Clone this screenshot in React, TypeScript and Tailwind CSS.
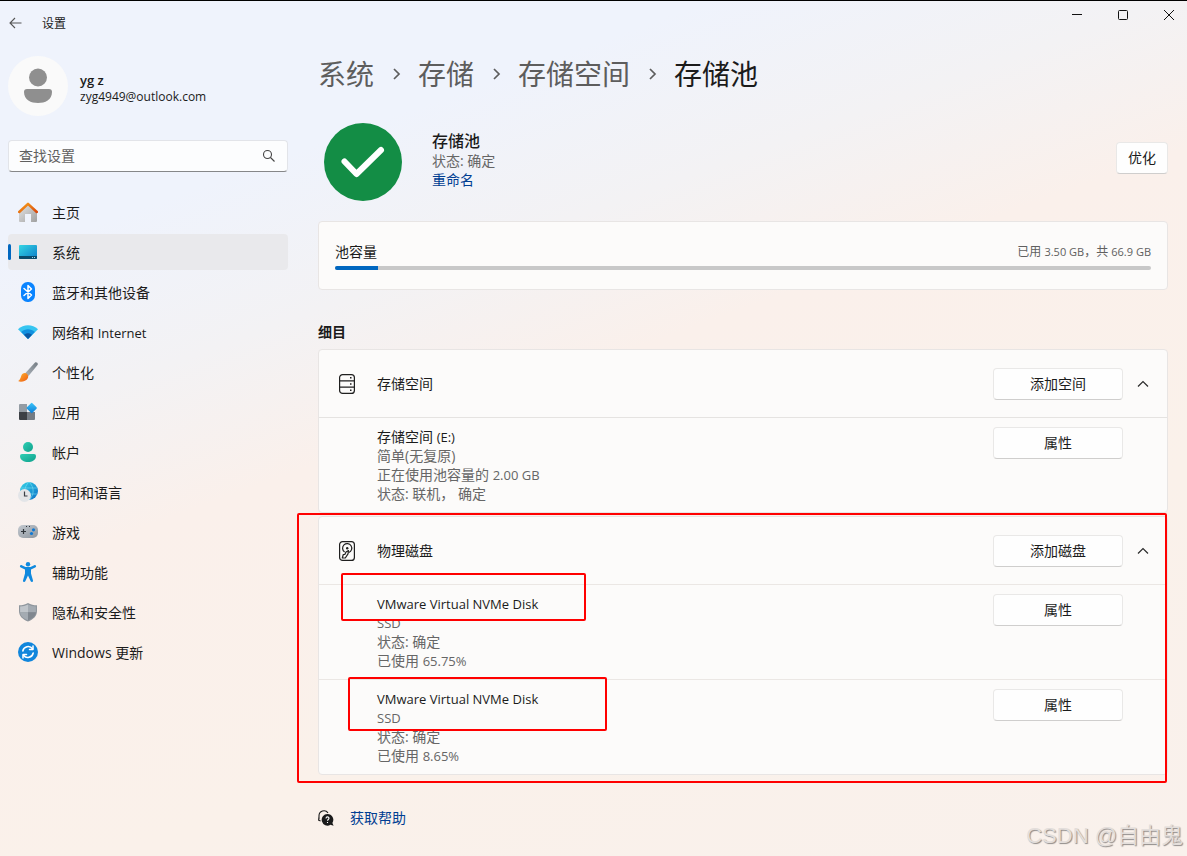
import type { ReactNode } from 'react'

const HomeIcon = () => (
    <svg width="20" height="20" viewBox="0 0 20 20">
        <defs>
            <linearGradient id="homeWall" x1="0" y1="0" x2="1" y2="1">
                <stop offset="0" stopColor="#e6e6e6" />
                <stop offset="1" stopColor="#a0a0a0" />
            </linearGradient>
            <linearGradient id="homeRoof" x1="0" y1="0" x2="1" y2="1">
                <stop offset="0" stopColor="#f9a01b" />
                <stop offset="1" stopColor="#d8480c" />
            </linearGradient>
        </defs>
        <path d="M1 10 10 1.600 19 10v9a1 1 0 0 1-1 1h-5v-8H7v8H2a1 1 0 0 1-1-1z" fill="url(#homeWall)" />
        <path d="M1.200 10 10 1.800l8.800 8.200" fill="none" stroke="url(#homeRoof)" strokeWidth="2.500" strokeLinecap="round" strokeLinejoin="round" />
    </svg>
)

const SystemIcon = () => (
    <svg width="20" height="20" viewBox="0 0 20 20">
        <defs>
            <linearGradient id="screen" x1="0" y1="0" x2="1" y2="1">
                <stop offset="0" stopColor="#35d6e4" />
                <stop offset="1" stopColor="#0d7cc8" />
            </linearGradient>
        </defs>
        <rect x="1" y="3" width="18" height="14" rx="1" fill="url(#screen)" />
        <path d="M1 14h18v2a1 1 0 0 1-1 1H2a1 1 0 0 1-1-1z" fill="#0b4a6b" />
        <path d="M14 15h1v1h-1zM16 15h1v1h-1z" fill="#9fdcf0" />
    </svg>
)

const BluetoothIcon = () => (
    <svg width="20" height="20" viewBox="0 0 20 20">
        <rect x="3" y="0" width="14" height="20" rx="6.500" fill="#0a84ff" />
        <path d="M6 6.500 13.500 13 10 16.500v-13L13.500 7 6 13.500" fill="none" stroke="#fff" strokeWidth="1.500" strokeLinejoin="round" strokeLinecap="round" />
    </svg>
)

const NetworkIcon = () => (
    <svg width="20" height="20" viewBox="0 0 20 20">
        <path d="M0 7.200C5.500 1.900 14.500 1.900 20 7.200L10 17z" fill="#36c5f1" />
        <path d="M3.200 10c3.800-3.600 9.800-3.600 13.600 0L10 17z" fill="#1290df" />
        <path d="M6 12.800c2.300-2.100 5.700-2.100 8 0L10 17z" fill="#0c59a4" />
    </svg>
)

const BrushIcon = () => (
    <svg width="20" height="20" viewBox="0 0 20 20">
        <defs>
            <linearGradient id="bristle" x1="0" y1="0" x2="1" y2="1">
                <stop offset="0" stopColor="#ffb52e" />
                <stop offset="1" stopColor="#ee5a12" />
            </linearGradient>
            <linearGradient id="handle" x1="1" y1="0" x2="0" y2="1">
                <stop offset="0" stopColor="#747c84" />
                <stop offset="1" stopColor="#adb5bc" />
            </linearGradient>
        </defs>
        <path d="M7.200 11.200 16.800.8c1.600-1.300 3.800.6 2.700 2.300L10.500 14z" fill="url(#handle)" />
        <path d="M3.200 14c.7-3 4.500-4 6.200-1.800 2 2.600 0 5.500-2.400 6.600-2.300 1-5 1.200-7 .3 1.500-.6 2.500-2.700 3.200-5.100z" fill="url(#bristle)" />
    </svg>
)

const AppsIcon = () => (
    <svg width="20" height="20" viewBox="0 0 20 20">
        <defs>
            <linearGradient id="tileBlue" x1="0" y1="0" x2="1" y2="1">
                <stop offset="0" stopColor="#3cc6fa" />
                <stop offset="1" stopColor="#0b7bd6" />
            </linearGradient>
        </defs>
        <path d="M1 3a1 1 0 0 1 1-1h7v8H1z" fill="#949ca4" />
        <path d="M1 10h8v8H2a1 1 0 0 1-1-1z" fill="#3c4045" />
        <path d="M9 10h8v7a1 1 0 0 1-1 1H9z" fill="#757c84" />
        <rect x="9.800" y="2.100" width="7.800" height="7.800" rx="1" transform="rotate(45 13.700 6)" fill="url(#tileBlue)" />
    </svg>
)

const AccountIcon = () => (
    <svg width="20" height="20" viewBox="0 0 20 20">
        <defs>
            <linearGradient id="person" x1="0" y1="0" x2="1" y2="1">
                <stop offset="0" stopColor="#2fcfb4" />
                <stop offset="1" stopColor="#0fa08c" />
            </linearGradient>
        </defs>
        <circle cx="10" cy="5" r="5" fill="url(#person)" />
        <path d="M4 12h12a2 2 0 0 1 2 2c0 4-4 6-8 6s-8-2-8-6a2 2 0 0 1 2-2z" fill="url(#person)" />
    </svg>
)

const TimeIcon = () => (
    <svg width="20" height="20" viewBox="0 0 20 20">
        <defs>
            <linearGradient id="globe" x1="0" y1="0" x2="1" y2="1">
                <stop offset="0" stopColor="#35d3e6" />
                <stop offset="1" stopColor="#0c6fc7" />
            </linearGradient>
        </defs>
        <circle cx="11" cy="9" r="9" fill="url(#globe)" />
        <path d="M3 6h16M3 12h16M11 0c-5.500 5-5.500 13 0 18M11 0c5.500 5 5.500 13 0 18" fill="none" stroke="#7fe3f3" strokeWidth=".8" opacity=".7" />
        <circle cx="6.500" cy="13.500" r="6.500" fill="#e3e5e8" />
        <path d="M6.500 9.500V14H9.500" fill="none" stroke="#3a3f45" strokeWidth="1.200" />
    </svg>
)

const GameIcon = () => (
    <svg width="20" height="20" viewBox="0 0 20 20">
        <defs>
            <linearGradient id="pad" x1="0" y1="0" x2="1" y2="1">
                <stop offset="0" stopColor="#c3c9d0" />
                <stop offset="1" stopColor="#8e959d" />
            </linearGradient>
        </defs>
        <rect x="0" y="3" width="20" height="13" rx="5" fill="url(#pad)" />
        <path d="M5.500 7v5M3 9.500h5" stroke="#30353a" strokeWidth="1.200" />
        <path d="M8 4h1v1H8zM11 4h1v1h-1z" fill="#30353a" />
        <circle cx="15.500" cy="7.800" r="1.600" fill="#0f78d4" />
        <circle cx="13.500" cy="11.500" r="1.600" fill="#0f78d4" />
    </svg>
)

const AccessIcon = () => (
    <svg width="20" height="20" viewBox="0 0 20 20" fill="#1089de">
        <circle cx="10" cy="2.300" r="2.200" />
        <path d="M2.300 3.400c-.8.800-.4 1.800.5 2.200L7 7.400v4.100l-2 7c-.2 1.600 1.700 2 2.300.8L10 13.500l2.700 5.800c.6 1.200 2.500.8 2.300-.8l-2-7V7.400l4.200-1.800c.9-.4 1.300-1.400.5-2.200-.4-.4-1-.4-1.500-.2L12.500 5h-5L3.800 3.200c-.5-.2-1.100-.2-1.500.2z" />
    </svg>
)

const ShieldIcon = () => (
    <svg width="20" height="20" viewBox="0 0 20 20">
        <path d="M10 1c2.700 1.700 5.700 2.300 9 2.300V9c0 5-3.700 8.500-9 10.500C4.700 17.500 1 14 1 9V3.300C4.300 3.300 7.300 2.700 10 1z" fill="#8f969d" />
        <path d="M10 2.400v7.800h7.900V4.400C15 4.300 12.400 3.700 10 2.400z" fill="#a4abb2" />
        <path d="M10 2.400C7.600 3.700 5 4.300 2.100 4.400v5.800H10z" fill="#c0c5ca" />
        <path d="M10 10.200v8c4.500-1.800 7.600-4.400 7.900-8z" fill="#80878f" />
        <path d="M10 10.200v8c-4.500-1.800-7.600-4.400-7.900-8z" fill="#a4abb2" />
    </svg>
)

const UpdateIcon = () => (
    <svg width="20" height="20" viewBox="0 0 20 20">
        <circle cx="10" cy="10" r="10" fill="#1086dc" />
        <path d="M4.800 9a5.400 5.400 0 0 1 9.700-2.200M15.200 11a5.400 5.400 0 0 1-9.700 2.200" fill="none" stroke="#fff" strokeWidth="1.500" strokeLinecap="round" />
        <path d="M15 4v3.500h-3.500M5 16v-3.500h3.500" fill="none" stroke="#fff" strokeWidth="1.500" strokeLinecap="round" strokeLinejoin="round" />
    </svg>
)

const PoolIcon = () => (
    <svg width="20" height="20" viewBox="0 0 20 20" fill="none" stroke="#1f1f1f" strokeWidth="1.200">
        <rect x="2.600" y=".6" width="14.800" height="18.800" rx="3" />
        <path d="M2.600 6.900h14.800M2.600 13.100h14.800" />
        <path d="M13 3.800h1.500M13 10h1.500M13 16.200h1.500" strokeWidth="1.500" />
    </svg>
)

const DiskIcon = () => (
    <svg width="20" height="20" viewBox="0 0 20 20" fill="none" stroke="#1f1f1f" strokeWidth="1.200">
        <rect x="2.600" y=".6" width="14.800" height="18.800" rx="3" />
        <path d="M7.600 11a4.600 4.600 0 1 1 4.200.5" />
        <circle cx="10.200" cy="7.200" r="1.200" fill="#1f1f1f" stroke="none" />
        <path d="m11.500 9.500-2.500 1.500-1.200 2.500H6.300l-1 3.500h3l2.700-4.100z" strokeLinejoin="round" />
    </svg>
)

const HelpIcon = () => (
    <svg width="16" height="16" viewBox="0 0 16 16">
        <path d="M1 9.500V5.800a5 5 0 0 1 9-3M1 6.500l-.4 3.700 2 .8" fill="none" stroke="#1b1b1b" strokeWidth="1.100" />
        <path d="M9.500 4a5.800 5.800 0 0 1 4.900 8.900l1.200 2.800-3.200-.9A5.800 5.800 0 1 1 9.500 4z" fill="#1b1b1b" />
        <path d="M8 8.400c0-2 3-2 3-.1 0 1.200-1.500 1.200-1.500 2.500M9.500 12v1" fill="none" stroke="#fff" strokeWidth="1.100" />
    </svg>
)

const navItems = [
    { label: '主页', icon: <HomeIcon /> },
    { label: '系统', icon: <SystemIcon />, active: true },
    { label: '蓝牙和其他设备', icon: <BluetoothIcon /> },
    { label: '网络和', latin: 'Internet', icon: <NetworkIcon /> },
    { label: '个性化', icon: <BrushIcon /> },
    { label: '应用', icon: <AppsIcon /> },
    { label: '帐户', icon: <AccountIcon /> },
    { label: '时间和语言', icon: <TimeIcon /> },
    { label: '游戏', icon: <GameIcon /> },
    { label: '辅助功能', icon: <AccessIcon /> },
    { label: '隐私和安全性', icon: <ShieldIcon /> },
    { label: 'Windows 更新', icon: <UpdateIcon /> },
]

const disks = [
    { id: 1, used: '65.75%', mark: '-top-3 left-[22px] h-12 w-[245px]' },
    { id: 2, used: '8.65%', mark: '-top-[3px] left-[29px] h-[54px] w-[259px]' },
]

const Button = ({ children, className = '' }: { children: ReactNode; className?: string }) => (
    <button className={`h-8 shrink-0 rounded border border-[#e9e8e7] border-b-[#cfcecd] bg-[#fefefe] text-sm ${className}`}>
        {children}
    </button>
)

const Latin = ({ children }: { children: ReactNode }) => <span className="text-[13px] leading-none">{children}</span>

const CardHeader = ({ icon, title, action }: { icon: ReactNode; title: string; action: string }) => (
    <div className="flex h-[67px] items-center pr-2 pl-[18px]">
        {icon}
        <h3 className="ml-5 flex-1 text-sm">{title}</h3>
        <Button className="w-[130px]">{action}</Button>
        <button aria-label="折叠" className="ml-1 flex h-8 w-8 items-center justify-center">
            <svg width="12" height="12" viewBox="0 0 12 12" fill="none" stroke="#2b2b2b" strokeWidth="1.200">
                <path d="m1 8.500 5-5 5 5" />
            </svg>
        </button>
    </div>
)

const CardRow = ({ title, lines }: { title: ReactNode; lines: ReactNode[] }) => (
    <div className="flex h-[94px] items-start justify-between pt-[9px] pr-11 pl-[58px]">
        <div className="text-sm leading-[19px] text-[#666]">
            <p className="h-[19px] text-[#1b1b1b]">{title}</p>
            {lines.map((line, i) => (
                <p key={i} className="h-[19px]">{line}</p>
            ))}
        </div>
        <Button className="w-[130px]">属性</Button>
    </div>
)

const Chevron = () => (
    <svg width="12" height="12" viewBox="0 0 12 12" className="mx-4" fill="none" stroke="#5d5d5d" strokeWidth="1.700">
        <path d="m4 1 5 5-5 5" />
    </svg>
)

const TitleBar = () => (
    <header className="flex h-[45px] items-start justify-between">
        <div className="flex h-11 items-center gap-5 pl-2">
            <button aria-label="返回">
                <svg width="14" height="14" viewBox="0 0 14 14" fill="none" stroke="#555" strokeWidth="1.100">
                    <path d="M13.500 7H2M7 2 2 7l5 5" />
                </svg>
            </button>
            <span className="pt-0.5 text-xs">设置</span>
        </div>
        <div className="flex gap-[10px]">
            <button aria-label="最小化" className="flex h-7 w-9 items-center justify-center">
                <svg width="10" height="10" viewBox="0 0 10 10"><path d="M0 4.500h10" stroke="#111" /></svg>
            </button>
            <button aria-label="最大化" className="flex h-7 w-9 items-center justify-center">
                <svg width="10" height="10" viewBox="0 0 10 10"><rect x=".5" y=".5" width="9" height="9" rx="1" fill="none" stroke="#111" /></svg>
            </button>
            <button aria-label="关闭" className="flex h-7 w-9 items-center justify-center">
                <svg width="10" height="10" viewBox="0 0 10 10"><path d="m0 0 10 10M10 0 0 10" stroke="#111" /></svg>
            </button>
        </div>
    </header>
)

const Sidebar = () => (
    <aside className="w-[280px] shrink-0">
        <div className="mt-[10px] flex items-center gap-3">
            <svg width="60" height="60" viewBox="0 0 60 60">
                <circle cx="30" cy="30" r="30" fill="#fafafa" />
                <circle cx="30" cy="21.500" r="9" fill="#8f8f8f" />
                <path d="M19 33h22a3 3 0 0 1 3 3c0 8-7 11-14 11s-14-3-14-11a3 3 0 0 1 3-3z" fill="#8f8f8f" />
            </svg>
            <div className="pt-1">
                <p className="text-[13px] leading-[18px] font-semibold">yg z</p>
                <p className="text-xs leading-4">zyg4949@outlook.com</p>
            </div>
        </div>
        <label className="mt-6 flex h-8 items-center rounded border border-[#e2e4e9] border-b-[#868789] bg-[#fcfdfe] px-[10px]">
            <input type="text" aria-label="查找设置" placeholder="查找设置" className="min-w-0 flex-1 bg-transparent text-sm outline-none placeholder:text-[#606060]" />
            <svg width="16" height="16" viewBox="0 0 16 16" fill="none" stroke="#444" strokeWidth="1.100">
                <circle cx="6.500" cy="6.500" r="4" />
                <path d="m9.500 9.500 4 4" />
            </svg>
        </label>
        <nav className="mt-[22px] flex flex-col gap-1">
            {navItems.map((item) => (
                <a
                    key={item.label}
                    href="#"
                    className={`relative flex h-9 items-center gap-[14px] rounded pl-[10px] text-sm ${item.active ? 'bg-[#e9e9ec]' : ''}`}
                >
                    {item.active && <span className="absolute top-[10px] left-0 h-4 w-[3px] rounded-full bg-[#0067c0]" />}
                    {item.icon}
                    <span className="pt-0.5">
                        {item.label} {item.latin && <Latin>{item.latin}</Latin>}
                    </span>
                </a>
            ))}
        </nav>
    </aside>
)

const App = () => {
    return (
        <div className="relative min-h-screen overflow-hidden border-t border-black bg-[linear-gradient(160deg,#eff3fc_20%,#f3f2f4_33%,#faf0eb_45%,#faf1ea_70%,#f9f1ec_100%)] font-['Open_Sans','Noto_Sans_CJK_SC',sans-serif] text-[#1b1b1b]">
            <TitleBar />
            <div className="flex gap-[30px] pr-[19px] pl-2">
                <Sidebar />
                <main className="min-w-0 flex-1">
                    <nav className="mt-2 flex h-10 items-center text-[28px] leading-10 text-[#5d5d5d]">
                        <a href="#">系统</a>
                        <Chevron />
                        <a href="#">存储</a>
                        <Chevron />
                        <a href="#">存储空间</a>
                        <Chevron />
                        <h1 className="text-[#1b1b1b]">存储池</h1>
                    </nav>

                    <section className="mt-7 flex h-20 items-center pl-[6px]">
                        <svg width="78" height="78" viewBox="0 0 78 78">
                            <circle cx="39" cy="39" r="39" fill="#138d45" />
                            <path d="m20.500 38.500 12 12.500L57 27" fill="none" stroke="#fff" strokeWidth="6" strokeLinecap="round" strokeLinejoin="round" />
                        </svg>
                        <div className="ml-[30px] flex flex-1 items-center justify-between pb-1">
                            <div className="text-sm leading-[19px]">
                                <h2 className="text-base leading-[19px] font-medium">存储池</h2>
                                <p className="text-[#666]">状态: 确定</p>
                                <a href="#" className="block text-[#003e92]">重命名</a>
                            </div>
                            <Button className="mb-1 w-[52px]">优化</Button>
                        </div>
                    </section>

                    <section className="mt-[19px] h-[69px] rounded border border-[#e8e5e4] bg-[#fcfbfa] px-4 pt-5">
                        <div className="flex items-center justify-between">
                            <h3 className="text-sm leading-5">池容量</h3>
                            <p className="text-xs text-[#606060]">
                                已用 <span className="text-[11px]">3.50 GB</span>，共 <span className="text-[11px]">66.9 GB</span>
                            </p>
                        </div>
                        <div className="mt-1 h-1 overflow-hidden rounded-full bg-[#c8c8c8]">
                            <div className="h-1 w-[43px] bg-[#0067c0]" />
                        </div>
                    </section>

                    <h2 className="mt-8 text-sm leading-5 font-semibold">细目</h2>

                    <section className="mt-[7px] rounded border border-[#e8e5e4] bg-[#fcfbfa]">
                        <CardHeader icon={<PoolIcon />} title="存储空间" action="添加空间" />
                        <div className="border-t border-[#e5e3e1]">
                            <CardRow
                                title={<>存储空间 <Latin>(E:)</Latin></>}
                                lines={['简单(无复原)', <>正在使用池容量的 <Latin>2.00 GB</Latin></>, '状态: 联机， 确定']}
                            />
                        </div>
                    </section>

                    <section className="relative mt-[3px] rounded border border-[#e8e5e4] bg-[#fcfbfa]">
                        <CardHeader icon={<DiskIcon />} title="物理磁盘" action="添加磁盘" />
                        {disks.map((disk) => (
                            <div key={disk.id} className="relative border-t border-[#ebe7e4]">
                                <CardRow
                                    title={<Latin>VMware Virtual NVMe Disk</Latin>}
                                    lines={[<Latin>SSD</Latin>, '状态: 确定', <>已使用 <Latin>{disk.used}</Latin></>]}
                                />
                                <span className={`pointer-events-none absolute rounded-xs border-2 border-[#f00] ${disk.mark}`} />
                            </div>
                        ))}
                        <span className="pointer-events-none absolute -top-1 right-0 -bottom-[9px] -left-[22px] rounded-xs border-2 border-[#f00]" />
                    </section>

                    <footer className="mt-[33px] mb-6 flex items-center gap-4 text-sm leading-5">
                        <HelpIcon />
                        <a href="#" className="text-[#003e92]">获取帮助</a>
                    </footer>
                </main>
            </div>
            <p className="pointer-events-none absolute right-1 bottom-1 text-[22px] leading-8 text-[#e3dedb] [text-shadow:1px_1px_1px_#8f8b89] font-['Liberation_Sans','Noto_Sans_CJK_SC',sans-serif]">
                CSDN @自由鬼
            </p>
        </div>
    )
}

export default App
